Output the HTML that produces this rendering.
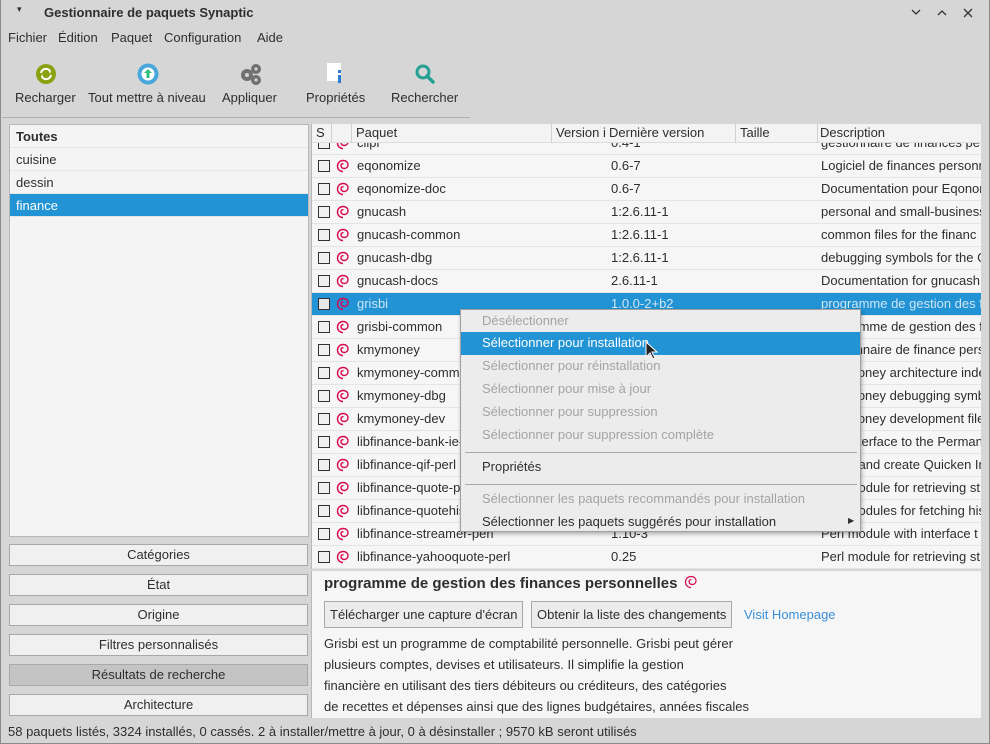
<!DOCTYPE html>
<html><head><meta charset="utf-8"><style>
*{box-sizing:border-box;margin:0;padding:0}
body{width:990px;height:744px;overflow:hidden;background:#d6d6d6;font-family:"Liberation Sans","DejaVu Sans",sans-serif;font-size:13px;color:#2e2e2e;position:relative}
.a{position:absolute;white-space:nowrap}
.win{position:absolute;left:0;top:0;width:990px;height:744px;border:1px solid #8a8a8a;border-top:none}
.lbox{position:absolute;left:9px;top:124px;width:300px;height:413px;background:#f4f4f4;border:1px solid #b8b8b8}
.lbox div{height:23px;line-height:23px;padding-left:6px;border-bottom:1px solid #e6e6e6}
.btn{position:absolute;left:9px;width:299px;height:22px;background:#f0f0f0;border:1px solid #a8a8a8;text-align:center;line-height:20px}
.list{position:absolute;left:311px;top:124px;width:670px;height:445px;background:#f6f6f6;overflow:hidden;border-left:1px solid #b8b8b8}
.hdr{position:absolute;left:0;top:0;width:670px;height:19px;background:#f3f3f3;border-bottom:1px solid #ddd;z-index:2}
.hdr span{position:absolute;top:1px;line-height:16px;white-space:nowrap}
.hdr i{position:absolute;top:0;height:19px;border-left:1px solid #d0d0d0}
.row{position:absolute;left:0;width:670px;height:23px;border-bottom:1px solid #e4e4e4;line-height:22px;white-space:nowrap}
.row span{position:absolute;white-space:nowrap}
.cb{position:absolute;left:6px;top:5px;width:12px;height:12px;border:1px solid #333;background:#f0f0f0}
.ic{position:absolute;left:24px;top:4px}
.sel{background:#2293d4;color:#cfe6f5}
.sel .cb{background:#e8e8e8}
.det{position:absolute;left:311px;top:571px;width:670px;height:147px;background:#f6f6f6;border-left:1px solid #b8b8b8}
.dbtn{position:absolute;top:30px;height:27px;background:#ececec;border:1px solid #a8a8a8;line-height:25px;padding:0 5px;white-space:nowrap}
.menu{position:absolute;left:460px;top:309px;width:401px;height:223px;background:#ececec;border:1px solid #a0a0a0;box-shadow:1px 2px 4px rgba(0,0,0,.3);z-index:5}
.mi{position:absolute;left:0;width:399px;height:23px;line-height:22px;padding-left:21px;color:#a4a4a4;white-space:nowrap}
.mi.on{color:#2e2e2e}
.mi.hl{background:#2293d4;color:#fff}
.sep{position:absolute;left:4px;width:392px;border-top:1px solid #a8a8a8}
</style></head><body>
<div class="win"></div>
<div class="a" style="left:17px;top:4px;font-size:9px">&#9662;</div>
<div class="a" style="left:44px;top:5px;font-weight:bold">Gestionnaire de paquets Synaptic</div>
<svg class="a" style="left:905px;top:6px" width="80" height="14" viewBox="0 0 80 14" fill="none" stroke="#333" stroke-width="1.3"><path d="M7 4l4 4 4-4"/><path d="M33 9l4-4 4 4"/><path d="M59 3l8 8M67 3l-8 8"/></svg>
<div class="a" style="left:8px;top:30px">Fichier</div>
<div class="a" style="left:58px;top:30px">Édition</div>
<div class="a" style="left:111px;top:30px">Paquet</div>
<div class="a" style="left:164px;top:30px">Configuration</div>
<div class="a" style="left:257px;top:30px">Aide</div>
<svg class="a" style="left:35px;top:63px" width="22" height="22" viewBox="0 0 22 22"><circle cx="11" cy="11" r="10" fill="#8ba111"/><path d="M6 10a5 5 0 0 1 9-2M16 12a5 5 0 0 1-9 2" stroke="#fff" stroke-width="2" fill="none"/><path d="M13 6l3 2-1 3z M9 16l-3-2 1-3z" fill="#fff"/></svg>
<svg class="a" style="left:137px;top:63px" width="22" height="22" viewBox="0 0 22 22"><circle cx="11" cy="11" r="10.5" fill="#4aa7db"/><circle cx="11" cy="11" r="6.5" fill="#fff"/><path d="M11 6l4 4h-2.5v5h-3v-5H7z" fill="#2ec27e"/></svg>
<svg class="a" style="left:239px;top:62px" width="24" height="24" viewBox="0 0 24 24" fill="#707070"><circle cx="8" cy="13" r="6"/><circle cx="17" cy="7" r="5"/><circle cx="17" cy="18" r="5"/><circle cx="8" cy="13" r="2" fill="#d6d6d6"/><circle cx="17" cy="7" r="1.6" fill="#d6d6d6"/><circle cx="17" cy="18" r="1.6" fill="#d6d6d6"/></svg>
<div class="a" style="left:327px;top:63px;width:14px;height:18px;background:#fff"></div>
<div class="a" style="left:338px;top:70px;width:3px;height:3px;background:#2a7fd4"></div>
<div class="a" style="left:338px;top:75px;width:3px;height:8px;background:#2a7fd4"></div>
<svg class="a" style="left:414px;top:63px" width="22" height="22" viewBox="0 0 22 22"><circle cx="9" cy="9" r="6" fill="none" stroke="#26a095" stroke-width="3"/><path d="M13 13l6 6" stroke="#26a095" stroke-width="3.5" stroke-linecap="round"/></svg>
<div class="a" style="left:15px;top:90px">Recharger</div>
<div class="a" style="left:88px;top:90px">Tout mettre à niveau</div>
<div class="a" style="left:222px;top:90px">Appliquer</div>
<div class="a" style="left:306px;top:90px">Propriétés</div>
<div class="a" style="left:391px;top:90px">Rechercher</div>
<div class="a" style="left:2px;top:117px;width:468px;border-top:1px solid #b0b0b0"></div>
<div class="lbox">
<div style="font-weight:bold">Toutes</div><div>cuisine</div><div>dessin</div><div style="background:#2293d4;color:#fff">finance</div>
</div>
<div class="btn" style="top:544px">Catégories</div>
<div class="btn" style="top:574px">État</div>
<div class="btn" style="top:604px">Origine</div>
<div class="btn" style="top:634px">Filtres personnalisés</div>
<div class="btn" style="top:664px;background:#c4c4c4">Résultats de recherche</div>
<div class="btn" style="top:694px">Architecture</div>
<div class="list">
<div class="hdr"><span style="left:4px">S</span><i style="left:19px"></i><i style="left:39px"></i><span style="left:44px">Paquet</span><i style="left:239px"></i><span style="left:244px">Version i</span><span style="left:297px">Dernière version</span><i style="left:423px"></i><span style="left:428px">Taille</span><i style="left:505px"></i><span style="left:508px">Description</span></div>
<div id="rows"></div>
</div>
<script>
var d=[["clipi","0.4-1","gestionnaire de finances pe"],["eqonomize","0.6-7","Logiciel de finances personn"],["eqonomize-doc","0.6-7","Documentation pour Eqonom"],["gnucash","1:2.6.11-1","personal and small-business"],["gnucash-common","1:2.6.11-1","common files for the financ"],["gnucash-dbg","1:2.6.11-1","debugging symbols for the G"],["gnucash-docs","2.6.11-1","Documentation for gnucash"],["grisbi","1.0.0-2+b2","programme de gestion des f"],["grisbi-common","1.0.0-2","programme de gestion des f"],["kmymoney","4.8.0-1","gestionnaire de finance pers"],["kmymoney-common","4.8.0-1","KMyMoney architecture inde"],["kmymoney-dbg","4.8.0-1","KMyMoney debugging symbo"],["kmymoney-dev","4.8.0-1","KMyMoney development file"],["libfinance-bank-ie-perl","0.30-1","Perl interface to the Perman"],["libfinance-qif-perl","3.02-1","Parse and create Quicken In"],["libfinance-quote-perl","1.38-1","Perl module for retrieving st"],["libfinance-quotehist-perl","1.20-1","Perl modules for fetching his"],["libfinance-streamer-perl","1.10-3","Perl module with interface t"],["libfinance-yahooquote-perl","0.25","Perl module for retrieving st"]];
var sw='<svg class="ic" width="13" height="14" viewBox="0 0 13 14"><path d="M7 12.5C3.5 12.5 1.5 10 1.5 7S3.8 1.5 7 1.5s5 2 5 4.3-1.8 3.7-3.8 3.7S5 8 5 6.6 6 4.5 7.5 4.7" fill="none" stroke="#d70751" stroke-width="1.4"/></svg>';
var h='';for(var i=0;i<d.length;i++){var t=8+23*i;h+='<div class="row'+(i==7?' sel':'')+'" style="top:'+t+'px"><div class="cb"></div>'+sw+'<span style="left:45px">'+d[i][0]+'</span><span style="left:299px">'+d[i][1]+'</span><span style="left:509px">'+d[i][2]+'</span></div>';}
document.getElementById('rows').innerHTML=h;
</script>
<div class="det">
<div class="a" style="left:12px;top:4px;font-size:15px;font-weight:bold">programme de gestion des finances personnelles</div>
<svg class="a" style="left:372px;top:4px" width="13" height="14" viewBox="0 0 13 14"><path d="M7 12.5C3.5 12.5 1.5 10 1.5 7S3.8 1.5 7 1.5s5 2 5 4.3-1.8 3.7-3.8 3.7S5 8 5 6.6 6 4.5 7.5 4.7" fill="none" stroke="#d70751" stroke-width="1.2"/></svg>
<div class="dbtn" style="left:12px">Télécharger une capture d'écran</div>
<div class="dbtn" style="left:219px">Obtenir la liste des changements</div>
<div class="a" style="left:432px;top:36px;color:#3b8fd8">Visit Homepage</div>
<div class="a" style="left:12px;top:62px;line-height:21px">Grisbi est un programme de comptabilité personnelle. Grisbi peut gérer<br>plusieurs comptes, devises et utilisateurs. Il simplifie la gestion<br>financière en utilisant des tiers débiteurs ou créditeurs, des catégories<br>de recettes et dépenses ainsi que des lignes budgétaires, années fiscales</div>
</div>
<div class="a" style="left:8px;top:724px">58 paquets listés, 3324 installés, 0 cassés. 2 à installer/mettre à jour, 0 à désinstaller ; 9570 kB seront utilisés</div>
<div class="menu">
<div class="mi" style="top:0">Désélectionner</div>
<div class="mi hl" style="top:22px">Sélectionner pour installation</div>
<div class="mi" style="top:45px">Sélectionner pour réinstallation</div>
<div class="mi" style="top:68px">Sélectionner pour mise à jour</div>
<div class="mi" style="top:91px">Sélectionner pour suppression</div>
<div class="mi" style="top:114px">Sélectionner pour suppression complète</div>
<div class="sep" style="top:142px"></div>
<div class="mi on" style="top:146px">Propriétés</div>
<div class="sep" style="top:174px"></div>
<div class="mi" style="top:178px">Sélectionner les paquets recommandés pour installation</div>
<div class="mi on" style="top:201px">Sélectionner les paquets suggérés pour installation</div>
<div class="a" style="left:387px;top:206px;font-size:8px">&#9654;</div>
</div>
<svg class="a" style="left:645px;top:341px;z-index:6" width="14" height="20" viewBox="0 0 14 20"><path d="M1 1v15l4-4 3 6 2-1-3-6h5z" fill="#222" stroke="#fff" stroke-width="1"/></svg>
</body></html>
